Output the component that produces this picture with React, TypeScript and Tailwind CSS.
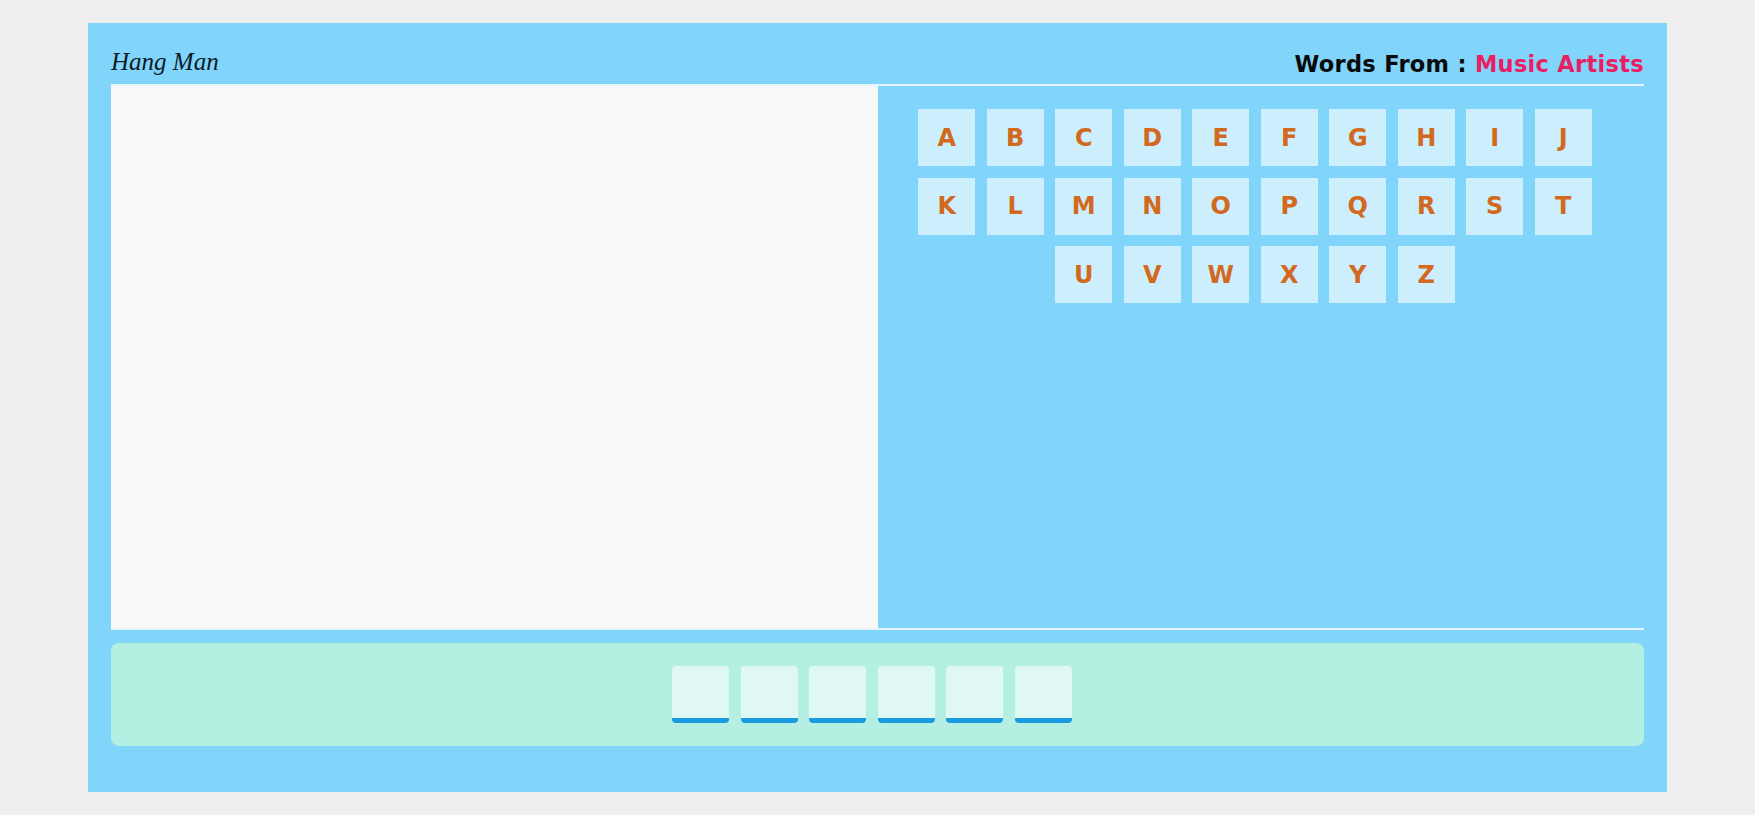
import React from "react";

const ROWS = "ABCDEFGHIJKLMNOPQRSTUVWXYZ".split("");

export default function App() {
  return (
    <div className="min-h-screen bg-[#efefef] py-[23px]">
      <div className="mx-auto flex h-[769px] w-[1579px] flex-col bg-[#81d4fa] px-[23px] pt-[23px]">
        <header className="flex h-[38px] items-center justify-between pb-[2px]">
          <h1
            className="mb-[6px] text-[25px] italic leading-none text-[#0b1b26]"
            style={{ fontFamily: '"Liberation Serif", serif' }}
          >
            Hang Man
          </h1>
          <h2
            className="text-[22.5px] font-bold leading-none tracking-[0.3px] text-[#0a0a0a]"
            style={{ fontFamily: '"DejaVu Sans", sans-serif' }}
          >
            Words From : <span className="text-[#e91e63]">Music Artists</span>
          </h2>
        </header>
        <main className="flex h-[546px] border-y-2 border-[#e3f4fc]">
          <div className="w-1/2 bg-[#f9f9f9]" />
          <div className="w-1/2 px-[23px] pt-[23px]">
            <div className="flex flex-wrap justify-center">
              {ROWS.map((l) => (
                <button
                  key={l}
                  className="mb-[11.5px] mr-[11.5px] flex h-[57px] w-[57px] items-center justify-center bg-[#cdeefd] text-[24px] font-bold text-[#d2691e]"
                  style={{ fontFamily: '"DejaVu Sans", sans-serif' }}
                >
                  {l}
                </button>
              ))}
            </div>
          </div>
        </main>
        <section className="mt-[13px] flex h-[103px] items-center justify-center rounded-[8px] bg-[#b4f0e2]">
          {Array.from({ length: 6 }).map((_, i) => (
            <div
              key={i}
              className="mr-[11.5px] h-[57px] w-[57px] rounded-[4px] border-b-[5px] border-[#1a9be0] bg-[#e0f8f3]"
            />
          ))}
        </section>
      </div>
    </div>
  );
}
